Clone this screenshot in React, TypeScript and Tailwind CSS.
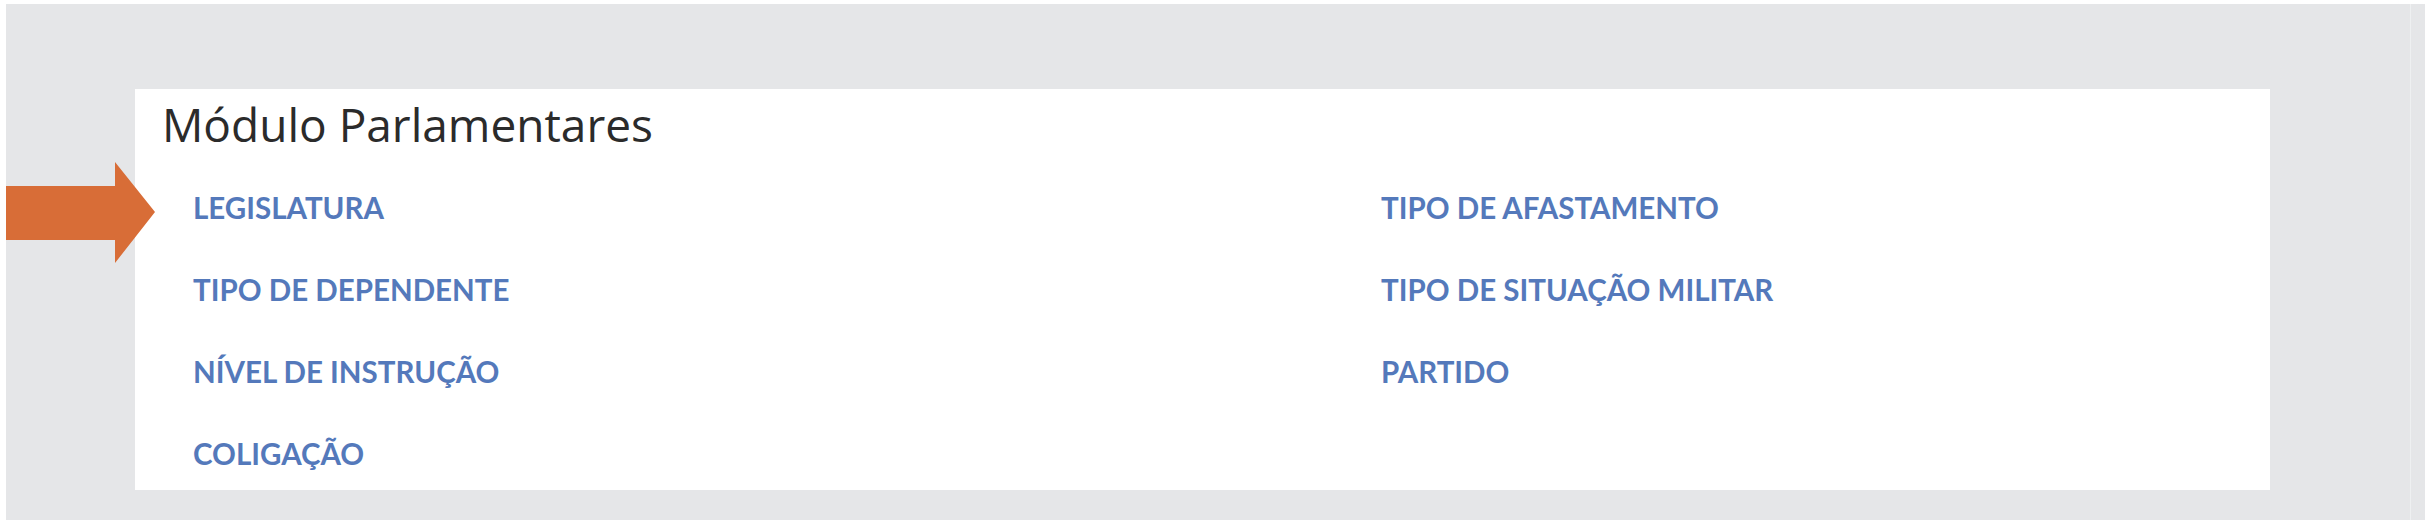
const leftLinks = ['LEGISLATURA', 'TIPO DE DEPENDENTE', 'NÍVEL DE INSTRUÇÃO', 'COLIGAÇÃO']
const rightLinks = ['TIPO DE AFASTAMENTO', 'TIPO DE SITUAÇÃO MILITAR', 'PARTIDO']

function Arrow() {
  return (
    <svg
      className="absolute left-[6px] top-[162px]"
      width="149"
      height="101"
      viewBox="0 0 149 101"
    >
      <polygon points="0,24 109,24 109,0 149,50 109,101 109,78 0,78" fill="#d86d37" />
    </svg>
  )
}

export default function App() {
  return (
    <div className="relative w-[2425px] h-[521px] bg-white pt-[4px] pl-[6px] pb-[1px]">
      <div className="flex h-full bg-[#e5e6e8]">
        <div className="flex-1 pl-[129px] pt-[85px] pr-[140px]">
          <div className="bg-white h-[401px] pl-[27px] pt-[8px]" style={{ fontFamily: 'Lato, "Open Sans", sans-serif' }}>
            <h1
              className="text-[46px] leading-[1.2] text-[#2b2b2b] font-medium"
              style={{ fontFamily: '"Open Sans", sans-serif' }}
            >
              Módulo Parlamentares
            </h1>
            <div className="grid grid-cols-[1188px_1fr] pl-[31px] mt-[36px]">
              <ul className="flex flex-col gap-[42px]">
                {leftLinks.map(l => (
                  <li key={l} className="text-[29.5px] leading-[40px] font-bold text-[#5479bb]">{l}</li>
                ))}
              </ul>
              <ul className="flex flex-col gap-[42px]">
                {rightLinks.map(l => (
                  <li key={l} className="text-[29.5px] leading-[40px] font-bold text-[#5479bb]">{l}</li>
                ))}
              </ul>
            </div>
          </div>
        </div>
        <div className="w-px bg-[#eef0f1]" />
        <div className="w-[14px]" />
      </div>
      <Arrow />
    </div>
  )
}
